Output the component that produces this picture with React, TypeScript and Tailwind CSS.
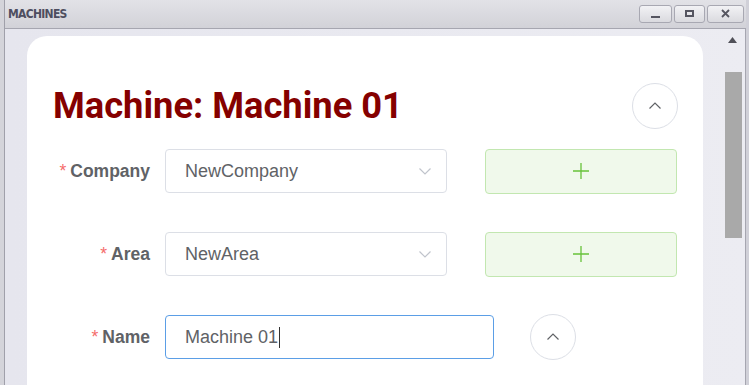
import React from 'react';

const labelFont = { fontFamily: '"Liberation Sans", Arial, sans-serif' };

function ChevronDown() {
  return (
    <svg width="14" height="14" viewBox="0 0 14 14" fill="none">
      <path d="M1.5 4.5 L7 10 L12.5 4.5" stroke="#c0c4cc" strokeWidth="1.2" />
    </svg>
  );
}

function ChevronUp() {
  return (
    <svg width="14" height="14" viewBox="0 0 14 14" fill="none">
      <path d="M1.5 9.5 L7 4 L12.5 9.5" stroke="#606266" strokeWidth="1.2" />
    </svg>
  );
}

function Plus() {
  return (
    <svg width="18" height="18" viewBox="0 0 18 18" fill="none">
      <path d="M9 1 V17 M1 9 H17" stroke="#67c23a" strokeWidth="1.3" />
    </svg>
  );
}

function CircleButton() {
  return (
    <button className="w-[46px] h-[46px] rounded-full border border-[#dcdfe6] bg-white flex items-center justify-center shrink-0">
      <ChevronUp />
    </button>
  );
}

function Label({ text }: { text: string }) {
  return (
    <div
      className="w-[97px] text-right text-[17.5px] font-bold text-[#606266] shrink-0"
      style={labelFont}
    >
      <span className="text-[#f56c6c] font-normal mr-[4px]">*</span>
      {text}
    </div>
  );
}

function SelectRow({ label, value }: { label: string; value: string }) {
  return (
    <div className="flex items-center h-[44px]">
      <Label text={label} />
      <div className="ml-[15px] w-[282px] h-[44px] border border-[#dcdfe6] rounded-[4px] flex items-center justify-between pl-[19px] pr-[14px]">
        <span className="text-[18px] text-[#606266]" style={labelFont}>
          {value}
        </span>
        <ChevronDown />
      </div>
      <button className="ml-[38px] w-[192px] h-[45px] rounded-[4px] border border-[#c2e7b0] bg-[#f0f9eb] flex items-center justify-center">
        <Plus />
      </button>
    </div>
  );
}

export default function App() {
  return (
    <div className="w-[749px] h-[385px] overflow-hidden bg-[#c8c8d0] flex">
      <div className="w-[5px] bg-[#d4d4da] border-r border-[#a0a0aa] shrink-0" />
      <div className="flex-1 flex flex-col">
        {/* title bar */}
        <div className="h-[29px] bg-gradient-to-b from-[#e2e2e7] to-[#d2d2d8] flex items-center justify-between pl-[3px] pr-[2px] border-b border-[#a6a6b0] shrink-0">
          <span
            className="text-[12px] font-bold text-[#4e4e60]"
            style={{ fontFamily: '"DejaVu Sans Condensed", "DejaVu Sans", sans-serif', letterSpacing: '-0.7px' }}
          >
            MACHINES
          </span>
          <div className="flex gap-[2px] mt-[-1px]">
            <div className="w-[33px] h-[18px] rounded-[3px] border border-[#a8a8b2] bg-gradient-to-b from-[#f2f2f5] to-[#dadadf] flex items-end justify-center pb-[4px]">
              <div className="w-[9px] h-[2px] bg-[#555560]" />
            </div>
            <div className="w-[31px] h-[18px] rounded-[3px] border border-[#a8a8b2] bg-gradient-to-b from-[#f2f2f5] to-[#dadadf] flex items-center justify-center">
              <div className="w-[9px] h-[7px] border-2 border-[#555560]" />
            </div>
            <div className="w-[37px] h-[18px] rounded-[3px] border border-[#a8a8b2] bg-gradient-to-b from-[#f2f2f5] to-[#dadadf] flex items-center justify-center">
              <svg width="9" height="9" viewBox="0 0 9 9">
                <path d="M1 1 L8 8 M8 1 L1 8" stroke="#555560" strokeWidth="1.8" />
              </svg>
            </div>
          </div>
        </div>
        {/* body */}
        <div className="flex-1 flex bg-gradient-to-r from-[#e6e6ee] to-[#ececf2]">
          <div className="flex-1 pl-[22px] pr-[15px] pt-[7px]">
            <div className="bg-white rounded-t-[20px] h-[400px] pl-[26px] pr-[25px] pt-[47px]">
              <div className="flex items-center justify-between h-[46px]">
                <h1
                  className="text-[36.3px] font-bold text-[#850000] leading-none"
                  style={{ fontFamily: 'Roboto, "Liberation Sans", sans-serif' }}
                >
                  Machine: Machine 01
                </h1>
                <CircleButton />
              </div>
              <div className="mt-[20px] flex flex-col gap-[39px]">
                <SelectRow label="Company" value="NewCompany" />
                <SelectRow label="Area" value="NewArea" />
                <div className="flex items-center h-[44px]">
                  <Label text="Name" />
                  <div className="ml-[15px] w-[329px] h-[44px] border border-[#5b9ee6] rounded-[4px] flex items-center pl-[19px]">
                    <span className="text-[18px] text-[#606266]" style={labelFont}>
                      Machine 01
                    </span>
                    <span className="w-[1px] h-[21px] bg-[#333] ml-[1px]" />
                  </div>
                  <div className="ml-[36px]">
                    <CircleButton />
                  </div>
                </div>
              </div>
            </div>
          </div>
          {/* scrollbar */}
          <div className="w-[28px] shrink-0 flex flex-col items-center pt-[8px] border-r border-[#a6a6b0]">
            <svg width="9" height="6" viewBox="0 0 9 6" className="ml-[2px]">
              <path d="M0 6 L4.5 0 L9 6 Z" fill="#505058" />
            </svg>
            <div className="mt-[29px] w-[17px] h-[166px] bg-[#a9a9a9] ml-[3px]" />
          </div>
        </div>
      </div>
      <div className="w-[3px] bg-[#d0d0d8] shrink-0" />
    </div>
  );
}
